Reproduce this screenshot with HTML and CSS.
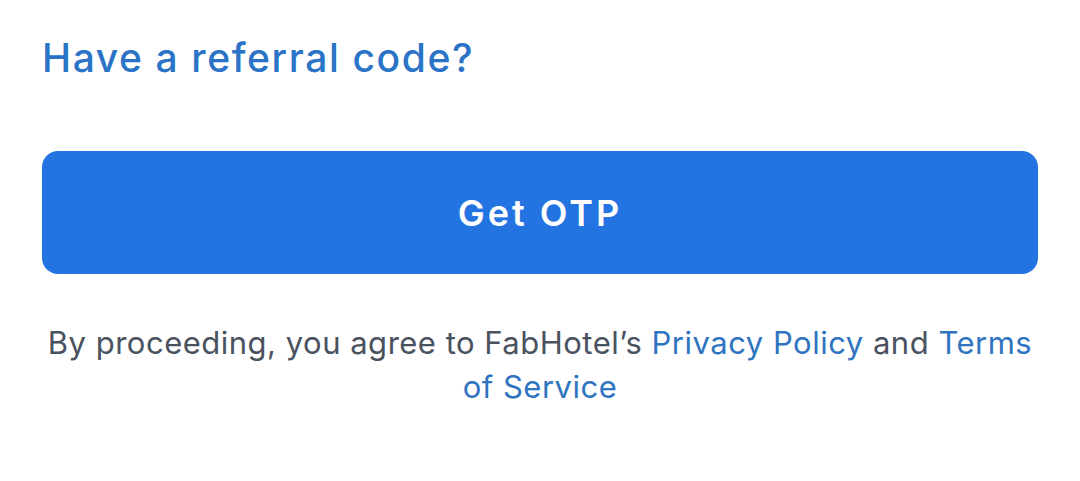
FILE: index.html
```html
<!DOCTYPE html>
<html lang="en">
<head>
    <meta charset="UTF-8">
    <meta name="viewport" content="width=device-width, initial-scale=1.0">
    <title>Get OTP</title>
    <link rel="stylesheet" href="styles.css">
</head>
<body>
    <div class="panel">
        <!-- Referral -->
        <a class="referral" href="#">Have a referral code?</a>

        <!-- Submit -->
        <button type="button" class="otp-btn">Get OTP</button>

        <!-- Legal -->
        <p class="terms">
            By proceeding, you agree to FabHotel’s <a href="#">Privacy Policy</a> and <a href="#">Terms of Service</a>
        </p>
    </div>
</body>
</html>
```

FILE: styles.css
```css
body {
    margin: 0;
    background: #ffffff;
    font-family: Inter, "Noto Sans", sans-serif;
}
.panel {
    padding: 33px 42px 0 42px;
    display: flex;
    flex-direction: column;
}
.referral {
    align-self: flex-start;
    color: #2a73c6;
    font-size: 39px;
    font-weight: 500;
    line-height: 50px;
    letter-spacing: 1.6px;
    text-decoration: none;
}
.otp-btn {
    margin-top: 68px;
    height: 123px;
    width: 100%;
    border: none;
    border-radius: 16px;
    background-color: #2374e0;
    color: #ffffff;
    font-family: inherit;
    font-size: 36px;
    font-weight: 600;
    letter-spacing: 3px;
    cursor: pointer;
}
.terms {
    margin: 47px 0 0 0;
    text-align: center;
    color: #4a5260;
    font-size: 31px;
    line-height: 44px;
    letter-spacing: 0.5px;
}
.terms a {
    color: #2f74bf;
    text-decoration: none;
}
```
